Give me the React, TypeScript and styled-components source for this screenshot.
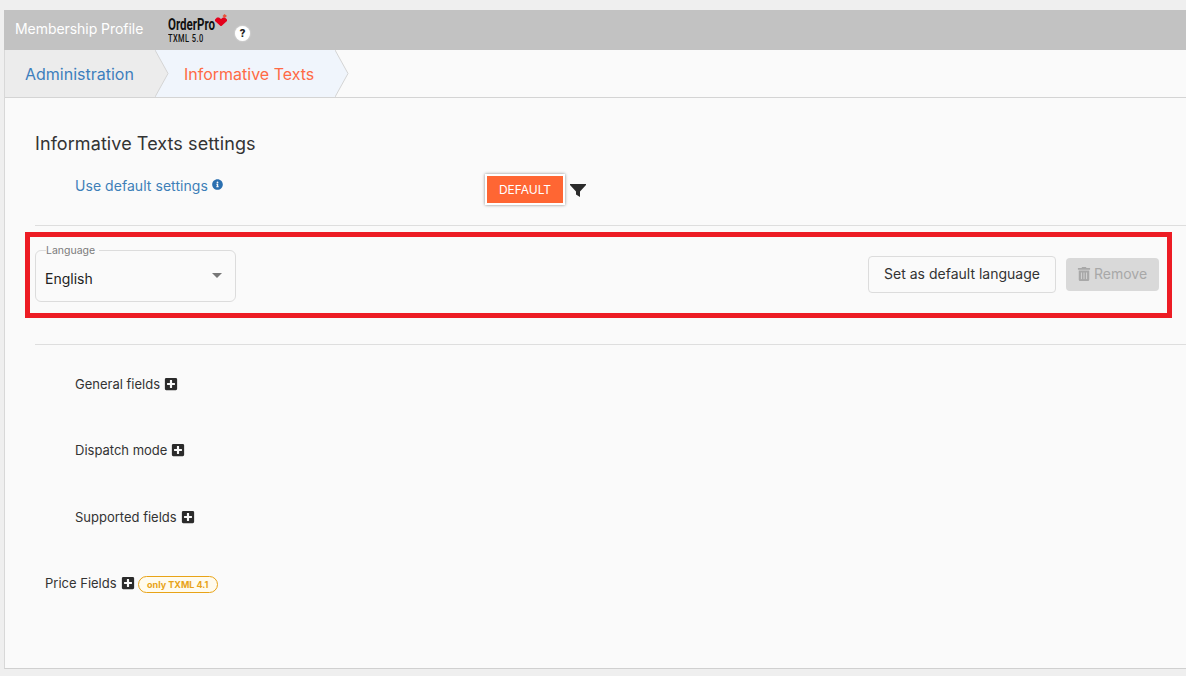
import { FC, PropsWithChildren } from 'react'
import { FaInfoCircle, FaPlusSquare, FaTrashAlt } from 'react-icons/fa'
import styled, { createGlobalStyle } from 'styled-components'

const GlobalStyle = createGlobalStyle`
  html, body {
    margin: 0;
    height: 100%;
    overflow: hidden;
    background: #efefef;
    font-family: Inter, 'Liberation Sans', sans-serif;
    color: #333;
  }
`

const Field: FC<PropsWithChildren> = ({ children }) => (
  <FieldRow $nested>
    <FieldLabel>{children}</FieldLabel>
    <FaPlusSquare size={14} color="#2b2b2b" />
  </FieldRow>
)

const App: FC = () => (
  <Page>
    <GlobalStyle />
    <Header>
      <ProfileName>Membership Profile</ProfileName>
      <Logo>
        <LogoTop>
          <LogoName>OrderPro</LogoName>
          <LogoMark viewBox="0 0 13 12">
            <path d="M0 5.5 L2 3.5 L4 3.5 L6 5 L8 3.5 L10 3.5 L12 5.5 L12 7 L6.5 12 L5.5 12 L0 7 Z" fill="#e3001b" />
            <path d="M9.5 0 L12 2 L9.5 4 L7.5 2 Z" fill="#e8503a" />
          </LogoMark>
        </LogoTop>
        <LogoVersion>TXML 5.0</LogoVersion>
      </Logo>
      <HelpBadge>?</HelpBadge>
    </Header>
    <Panel>
      <Breadcrumbs>
        <Crumb>
          <CrumbLink>Administration</CrumbLink>
          <CrumbArrow viewBox="0 0 14 47" preserveAspectRatio="none">
            <path d="M0 0 L13 23.5 L0 47" fill="#ececec" stroke="#d4d4d4" />
          </CrumbArrow>
        </Crumb>
        <Crumb $active>
          <CrumbLink $active>Informative Texts</CrumbLink>
          <CrumbArrow viewBox="0 0 14 47" preserveAspectRatio="none">
            <path d="M0 0 L13 23.5 L0 47" fill="#f0f5fc" stroke="#d4d4d4" />
          </CrumbArrow>
        </Crumb>
      </Breadcrumbs>
      <Content>
        <Title>Informative Texts settings</Title>
        <SettingsRow>
          <SettingsLabel>
            Use default settings
            <FaInfoCircle size={11} color="#2a6fb0" />
          </SettingsLabel>
          <DefaultFrame>
            <DefaultButton>DEFAULT</DefaultButton>
          </DefaultFrame>
          <FilterIcon viewBox="0 0 16 13">
            <path d="M0 0 H16 V1 L10 7.5 V13 L6 10.5 V7.5 L0 1 Z" fill="#2b2b2b" />
          </FilterIcon>
        </SettingsRow>
        <Divider />
        <Highlight>
          <LanguageBox>
            <LanguageLegend>Language</LanguageLegend>
            <LanguageValue>English</LanguageValue>
            <Caret />
          </LanguageBox>
          <Actions>
            <OutlineButton>Set as default language</OutlineButton>
            <RemoveButton>
              <FaTrashAlt size={14} />
              Remove
            </RemoveButton>
          </Actions>
        </Highlight>
        <LowerDivider />
        <Field>General fields</Field>
        <Field>Dispatch mode</Field>
        <Field>Supported fields</Field>
        <FieldRow>
          <FieldLabel>Price Fields</FieldLabel>
          <FaPlusSquare size={14} color="#2b2b2b" />
          <TxmlBadge>only TXML 4.1</TxmlBadge>
        </FieldRow>
      </Content>
    </Panel>
  </Page>
)

export default App

const Page = styled.div`
  height: 676px;
  width: 1186px;
  box-sizing: border-box;
  padding: 10px 0 7px 4px;
  display: flex;
  flex-direction: column;
  overflow: hidden;
`

const Header = styled.header`
  flex: none;
  height: 40px;
  box-sizing: border-box;
  display: flex;
  align-items: center;
  padding: 0 0 4px 11px;
  background: #c2c2c2;
`

const ProfileName = styled.span`
  width: 153px;
  font-size: 14px;
  letter-spacing: -0.05px;
  color: #fff;
`

const Logo = styled.div`
  display: flex;
  flex-direction: column;
  width: 66px;
  margin-top: 4px;
  color: #111;
`

const LogoTop = styled.div`
  display: flex;
  align-items: flex-start;
  height: 15px;
`

const LogoName = styled.span`
  flex: none;
  width: 47px;
  font-family: Roboto, sans-serif;
  font-size: 16px;
  line-height: 15px;
  font-weight: 700;
  transform: scaleX(0.72);
  transform-origin: left;
  white-space: nowrap;
`

const LogoMark = styled.svg`
  flex: none;
  width: 13px;
  height: 12px;
  margin-top: -3px;
`

const LogoVersion = styled.div`
  margin-top: 1px;
  font-family: Roboto, sans-serif;
  font-size: 11px;
  line-height: 11px;
  font-weight: 500;
  letter-spacing: 0.6px;
  transform: scaleX(0.68);
  transform-origin: left;
  white-space: nowrap;
`

const HelpBadge = styled.span`
  width: 15px;
  height: 15px;
  margin: 10px 0 0 1px;
  display: flex;
  align-items: center;
  justify-content: center;
  border-radius: 50%;
  background: #fff;
  box-shadow: 0 0 2px rgba(255, 255, 255, 0.7);
  font-family: Roboto, sans-serif;
  font-size: 11px;
  font-weight: 900;
  color: #222;
`

const Panel = styled.main`
  flex: 1;
  min-height: 0;
  display: flex;
  flex-direction: column;
  background: #fafafa;
  border-left: 1px solid #d8d8d8;
  border-bottom: 1px solid #d0d0d0;
`

const Breadcrumbs = styled.nav`
  flex: none;
  height: 47px;
  display: flex;
  border-bottom: 1px solid #d4d4d4;
`

const Crumb = styled.div<{ $active?: boolean }>`
  position: relative;
  display: flex;
  align-items: center;
  box-sizing: border-box;
  width: ${(props) => (props.$active ? '180px' : '150px')};
  padding-left: ${(props) => (props.$active ? '29px' : '20px')};
  background: ${(props) => (props.$active ? '#f0f5fc' : '#ececec')};
`

const CrumbLink = styled.span<{ $active?: boolean }>`
  position: relative;
  z-index: 1;
  font-size: 16px;
  color: ${(props) => (props.$active ? '#ff6a45' : '#3d7fbd')};
`

const CrumbArrow = styled.svg`
  position: absolute;
  top: 0;
  left: 100%;
  width: 14px;
  height: 100%;
  z-index: 2;
`

const Content = styled.section`
  padding: 34px 0 0 30px;
`

const Title = styled.h2`
  margin: 0;
  font-size: 18px;
  line-height: 24px;
  font-weight: 400;
  letter-spacing: 0.08px;
  color: #333;
`

const SettingsRow = styled.div`
  display: flex;
  align-items: flex-start;
  height: 40px;
  margin-top: 18px;
  padding-left: 40px;
`

const SettingsLabel = styled.div`
  width: 410px;
  display: flex;
  align-items: flex-start;
  gap: 4px;
  padding-top: 3px;
  font-size: 14px;
  line-height: 17px;
  letter-spacing: 0.05px;
  color: #3e7fb8;

  svg {
    margin-top: 2px;
  }
`

const DefaultFrame = styled.div`
  padding: 2px;
  background: #fff;
  box-shadow: 0 0 3px rgba(0, 0, 0, 0.45);
`

const DefaultButton = styled.div`
  width: 76px;
  height: 27px;
  display: flex;
  align-items: center;
  justify-content: center;
  background: #ff6633;
  color: #fff;
  font-size: 12px;
`

const FilterIcon = styled.svg`
  width: 16px;
  height: 13px;
  margin: 10px 0 0 5px;
`

const Divider = styled.hr`
  margin: 11px 0 0;
  border: 0;
  border-top: 1px solid #dedede;
`

const LowerDivider = styled(Divider)`
  margin: 26px 0 5.5px;
`

const Highlight = styled.div`
  width: 1147px;
  height: 86px;
  box-sizing: border-box;
  margin: 6px 0 0 -10px;
  padding: 0 8px 0 5px;
  display: flex;
  align-items: flex-start;
  justify-content: space-between;
  border: 5px solid #ed1c24;
`

const LanguageBox = styled.fieldset`
  position: relative;
  width: 201px;
  height: 58px;
  box-sizing: border-box;
  margin: 7px 0 0;
  padding: 0 9px;
  border: 1px solid #dcdcdc;
  border-radius: 6px;
`

const LanguageLegend = styled.legend`
  position: relative;
  top: 1px;
  margin-left: 1px;
  padding: 0 4px 0 0;
  font-size: 10.5px;
  line-height: 12px;
  color: #7a7a7a;
`

const LanguageValue = styled.div`
  margin-top: 13px;
  font-size: 14px;
  line-height: 20px;
  color: #222;
`

const Caret = styled.span`
  position: absolute;
  top: 17px;
  right: 13px;
  border-style: solid;
  border-width: 5px 5px 0;
  border-color: #777 transparent transparent;
`

const Actions = styled.div`
  display: flex;
  align-items: center;
  gap: 10px;
  margin-top: 19px;
`

const OutlineButton = styled.button`
  width: 188px;
  height: 37px;
  padding: 0 0 2px;
  background: #fafafa;
  border: 1px solid #dcdcdc;
  border-radius: 4px;
  font: inherit;
  font-size: 14px;
  color: #333;
`

const RemoveButton = styled.button`
  width: 93px;
  height: 33px;
  display: flex;
  align-items: center;
  justify-content: center;
  gap: 3px;
  padding: 0 1px 2px 0;
  background: #d9d9d9;
  border: 0;
  border-radius: 4px;
  font: inherit;
  font-size: 14px;
  color: #a8a8a8;
`

const FieldRow = styled.div<{ $nested?: boolean }>`
  height: 66.5px;
  display: flex;
  align-items: center;
  gap: 4px;
  padding-left: ${(props) => (props.$nested ? '40px' : '10px')};

  svg {
    flex: none;
  }
`

const FieldLabel = styled.span`
  font-size: 13px;
  color: #333;
`

const TxmlBadge = styled.span`
  height: 17px;
  box-sizing: border-box;
  display: flex;
  align-items: center;
  margin: 2px 0 0 -1px;
  padding: 0 8.5px;
  border: 1px solid #e8a317;
  border-radius: 9px;
  background: #fffbee;
  color: #e8a317;
  font-size: 9px;
  font-weight: 700;
`
